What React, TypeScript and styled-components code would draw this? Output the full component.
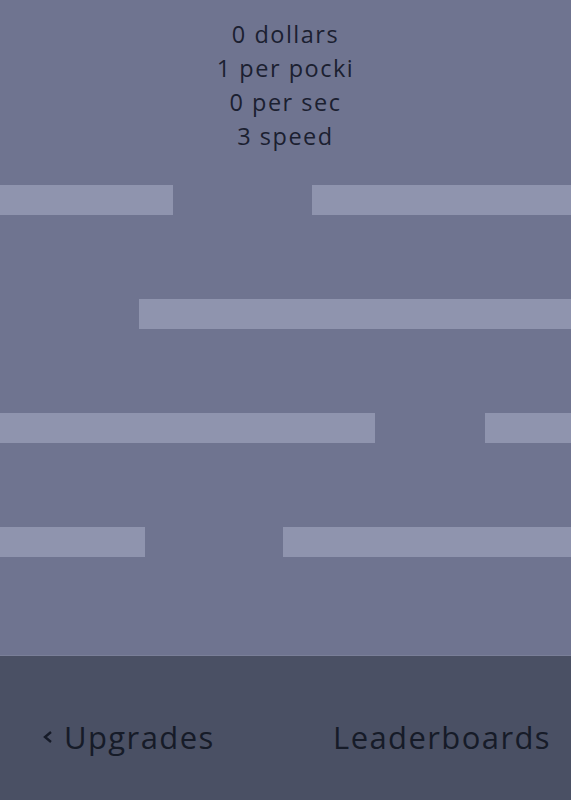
import React from 'react';
import styled, { createGlobalStyle } from 'styled-components';

const Global = createGlobalStyle`
  html, body {
    margin: 0;
    padding: 0;
    background: #6f7490;
  }
  body {
    font-family: "Open Sans", "Noto Sans", sans-serif;
  }
`;

const Page = styled.div`
  width: 571px;
  height: 800px;
  display: flex;
  flex-direction: column;
  background: #6f7490;
  overflow: hidden;
`;

const Stats = styled.div`
  padding-top: 17px;
  display: flex;
  flex-direction: column;
  align-items: center;
  color: #1b2030;
  font-size: 23.5px;
  letter-spacing: 1.5px;
  line-height: 34px;
`;

const Field = styled.div`
  flex: 1;
  display: flex;
  flex-direction: column;
  gap: 84px;
  padding-top: 32px;
`;

const Row = styled.div`
  display: flex;
  height: 30px;
`;

const Bar = styled.div<{ w: number }>`
  width: ${(p) => p.w}px;
  flex-shrink: 0;
  background: #8f94ae;
`;

const Gap = styled.div<{ w: number }>`
  width: ${(p) => p.w}px;
  flex-shrink: 0;
`;

const Footer = styled.div`
  height: 145px;
  background: #4a5064;
  border-top: 1px solid #7a7f98;
  box-sizing: border-box;
  display: flex;
  align-items: center;
  justify-content: space-between;
  padding: 18px 20px 0 42px;
  color: #161b28;
  font-size: 31px;
  letter-spacing: 1.4px;
`;

const NavItem = styled.span`
  display: flex;
  align-items: center;
  gap: 10px;
`;

const rows = [
  [173, 139, 259],
  [0, 139, 432],
  [375, 110, 86],
  [145, 138, 288],
];

export default function App() {
  return (
    <Page>
      <Global />
      <Stats>
        <span>0 dollars</span>
        <span>1 per pocki</span>
        <span>0 per sec</span>
        <span>3 speed</span>
      </Stats>
      <Field>
        {rows.map((r, i) => (
          <Row key={i}>
            <Bar w={r[0]} />
            <Gap w={r[1]} />
            <Bar w={r[2]} />
          </Row>
        ))}
      </Field>
      <Footer>
        <NavItem>
          <svg width="12" height="16" viewBox="0 0 12 16">
            <path d="M9 3 L3 8 L9 13" fill="none" stroke="#161b28" strokeWidth="2.4" />
          </svg>
          Upgrades
        </NavItem>
        <NavItem>Leaderboards</NavItem>
      </Footer>
    </Page>
  );
}
